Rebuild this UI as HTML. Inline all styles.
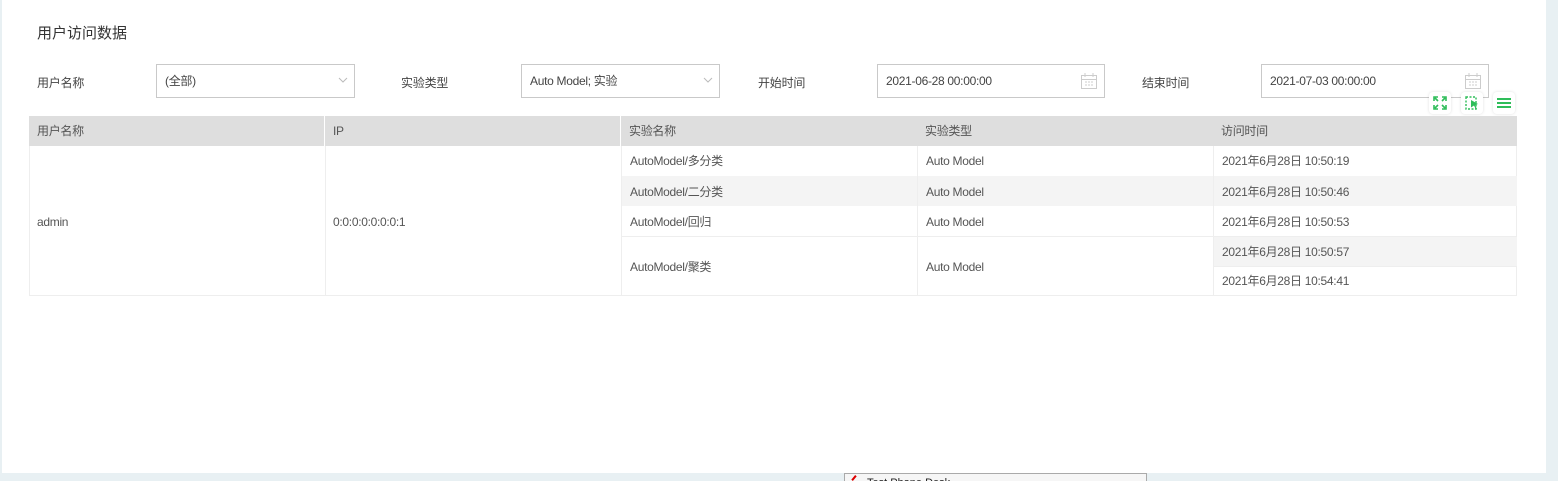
<!DOCTYPE html>
<html><head><meta charset="utf-8"><style>
*{margin:0;padding:0;box-sizing:border-box}
html,body{width:1558px;height:481px;overflow:hidden}
body{background:#e8f0f3;font-family:"Liberation Sans","Noto Sans CJK SC",sans-serif;font-size:12px;color:#555;position:relative}
.a{position:absolute}
#main{left:2px;top:0;width:1544px;height:473px;background:#fff}
.lbl{font-size:12px;color:#444;letter-spacing:-0.2px}
.box{border:1px solid #c9c9c9;background:#fff;height:34px;line-height:32px;padding-left:8px;color:#444;letter-spacing:-0.3px}
.cell{position:absolute;line-height:30px;padding-left:8px;color:#555;letter-spacing:-0.3px;white-space:nowrap}
.ib{width:22px;height:22px;background:#fff;border-radius:4px;box-shadow:0 0 3px rgba(0,0,0,.12)}
</style></head><body>
<div class="a" id="main"></div>
<div class="a" style="left:37px;top:22px;font-size:15px;color:#333">用户访问数据</div>

<div class="a lbl" style="left:37px;top:74px">用户名称</div>
<div class="a box" style="left:156px;top:64px;width:199px">(全部)</div>
<svg class="a" style="left:338px;top:76px" width="10" height="8"><path d="M1 2l4 4 4-4" stroke="#bbb" fill="none"/></svg>

<div class="a lbl" style="left:401px;top:74px">实验类型</div>
<div class="a box" style="left:521px;top:64px;width:199px">Auto Model; 实验</div>
<svg class="a" style="left:703px;top:76px" width="10" height="8"><path d="M1 2l4 4 4-4" stroke="#bbb" fill="none"/></svg>

<div class="a lbl" style="left:758px;top:74px">开始时间</div>
<div class="a box" style="left:877px;top:64px;width:228px">2021-06-28 00:00:00</div>
<svg class="a" style="left:1080px;top:72px" width="18" height="18"><rect x="1.5" y="3.5" width="15" height="13" fill="none" stroke="#ccc"/><path d="M1.5 7.5h15M5 1v4M13 1v4" stroke="#ccc"/><path d="M5 10h2M8 10h2M11 10h2M5 13h2M8 13h2M11 13h2" stroke="#ccc"/></svg>

<div class="a lbl" style="left:1142px;top:74px">结束时间</div>
<div class="a box" style="left:1261px;top:64px;width:228px">2021-07-03 00:00:00</div>
<svg class="a" style="left:1464px;top:72px" width="18" height="18"><rect x="1.5" y="3.5" width="15" height="13" fill="none" stroke="#ccc"/><path d="M1.5 7.5h15M5 1v4M13 1v4" stroke="#ccc"/><path d="M5 10h2M8 10h2M11 10h2M5 13h2M8 13h2M11 13h2" stroke="#ccc"/></svg>

<div class="a ib" style="left:1429px;top:92px"></div>
<svg class="a" style="left:1433px;top:96px" width="14" height="14" fill="none" stroke="#2ebd59" stroke-width="1.6"><path d="M1 5V1h4M9 1h4v4M13 9v4H9M5 13H1V9M2 2l3 3M12 2L9 5M12 12L9 9M2 12l3-3"/></svg>
<div class="a ib" style="left:1461px;top:92px"></div>
<svg class="a" style="left:1465px;top:96px" width="14" height="14"><rect x="1" y="1" width="10" height="12" fill="none" stroke="#2ebd59" stroke-width="1.4" stroke-dasharray="2 1.5"/><path d="M6 4l7 4-3 1 2 4-1 .5-2-4-3 2z" fill="#2ebd59"/></svg>
<div class="a ib" style="left:1493px;top:92px"></div>
<svg class="a" style="left:1497px;top:97px" width="14" height="12" fill="#2ebd59"><rect x="0" y="1" width="14" height="2"/><rect x="0" y="5" width="14" height="2"/><rect x="0" y="9" width="14" height="2"/></svg>

<!-- table -->
<div class="a" style="left:29px;top:116px;width:1488px;height:30px;background:#dedede"></div>
<div class="a" style="left:324px;top:116px;width:1px;height:30px;background:#fff"></div>
<div class="a" style="left:620px;top:116px;width:1px;height:30px;background:#fff"></div>
<div class="cell" style="left:29px;top:116px">用户名称</div>
<div class="cell" style="left:325px;top:116px">IP</div>
<div class="cell" style="left:621px;top:116px">实验名称</div>
<div class="cell" style="left:917px;top:116px">实验类型</div>
<div class="cell" style="left:1213px;top:116px">访问时间</div>

<div class="a" style="left:29px;top:146px;width:1488px;height:150px;border:1px solid #eee;border-top:none"></div>
<div class="a" style="left:621px;top:176px;width:896px;height:30px;background:#f4f4f4"></div>
<div class="a" style="left:1214px;top:236px;width:303px;height:30px;background:#f4f4f4"></div>
<div class="a" style="left:325px;top:146px;width:1px;height:150px;background:#eee"></div>
<div class="a" style="left:621px;top:146px;width:1px;height:150px;background:#eee"></div>
<div class="a" style="left:917px;top:146px;width:1px;height:150px;background:#eee"></div>
<div class="a" style="left:1213px;top:146px;width:1px;height:150px;background:#eee"></div>
<div class="a" style="left:621px;top:236px;width:896px;height:1px;background:#eee"></div>
<div class="a" style="left:1213px;top:266px;width:304px;height:1px;background:#eee"></div>

<div class="cell" style="left:29px;top:207px">admin</div>
<div class="cell" style="left:325px;top:207px">0:0:0:0:0:0:0:1</div>
<div class="cell" style="left:622px;top:146px">AutoModel/多分类</div>
<div class="cell" style="left:622px;top:177px">AutoModel/二分类</div>
<div class="cell" style="left:622px;top:207px">AutoModel/回归</div>
<div class="cell" style="left:622px;top:252px">AutoModel/聚类</div>
<div class="cell" style="left:918px;top:146px">Auto Model</div>
<div class="cell" style="left:918px;top:177px">Auto Model</div>
<div class="cell" style="left:918px;top:207px">Auto Model</div>
<div class="cell" style="left:918px;top:252px">Auto Model</div>
<div class="cell" style="left:1214px;top:146px">2021年6月28日 10:50:19</div>
<div class="cell" style="left:1214px;top:177px">2021年6月28日 10:50:46</div>
<div class="cell" style="left:1214px;top:207px">2021年6月28日 10:50:53</div>
<div class="cell" style="left:1214px;top:237px">2021年6月28日 10:50:57</div>
<div class="cell" style="left:1214px;top:266px">2021年6月28日 10:54:41</div>

<!-- bottom popup -->
<div class="a" style="left:844px;top:473px;width:303px;height:10px;background:#f6f6f6;border:1px solid #aaa;border-bottom:none;overflow:hidden">
<div class="a" style="left:22px;top:3px;font-size:11px;color:#222;white-space:nowrap">Test Phone Desk</div>
</div>
<div class="a" style="left:851px;top:477px;width:6px;height:2px;background:#d00;transform:rotate(-50deg)"></div>
</body></html>
